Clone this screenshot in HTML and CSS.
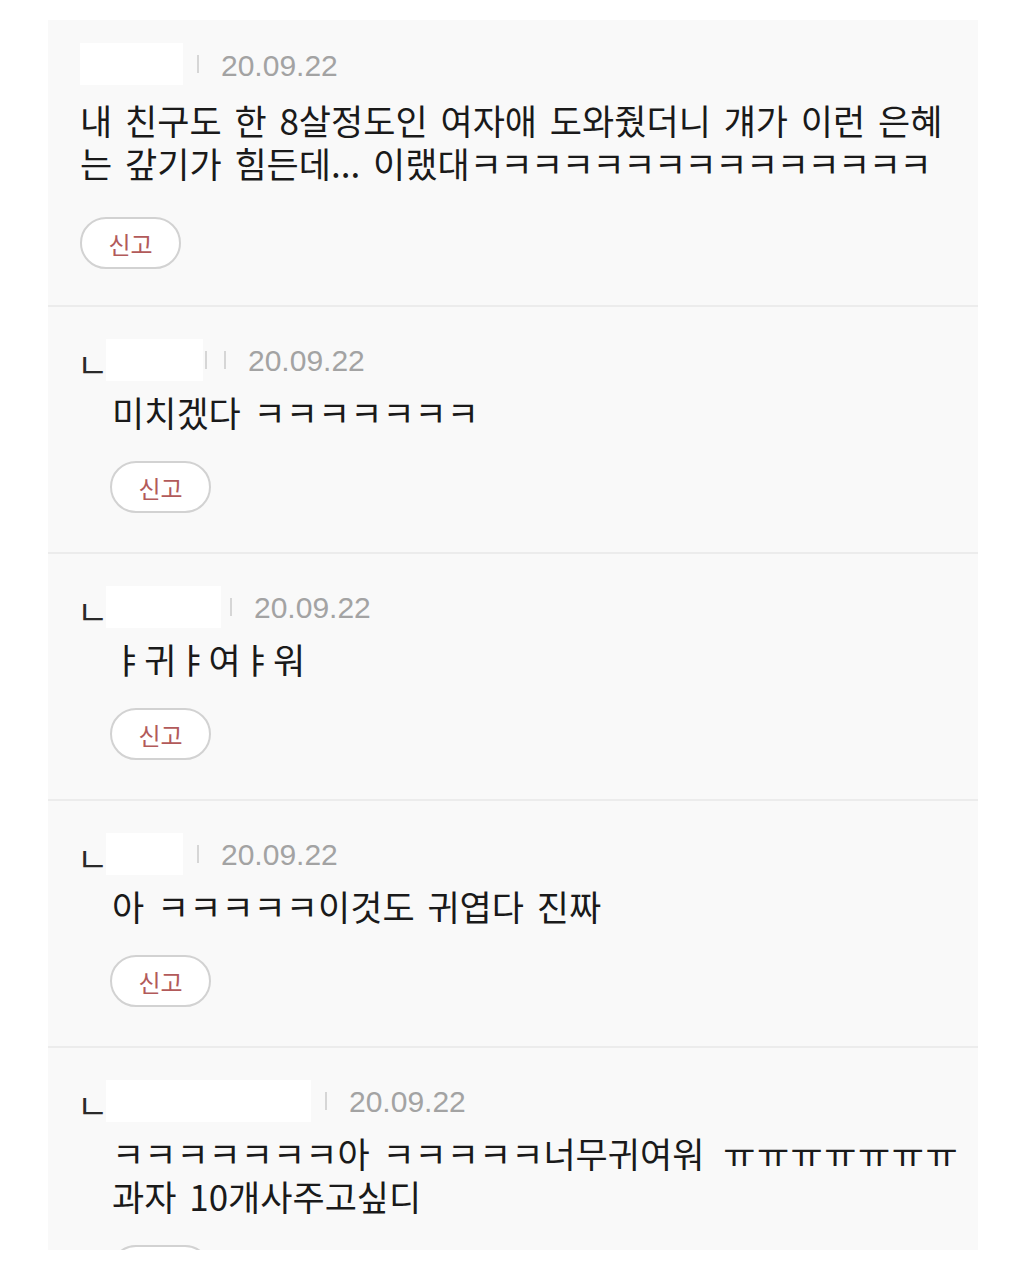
FILE: index.html
```html
<!DOCTYPE html>
<html lang="ko">
<head>
    <meta charset="UTF-8">
    <meta name="viewport" content="width=device-width, initial-scale=1.0">
    <title>댓글</title>
    <link rel="stylesheet" href="styles.css">
</head>
<body>
    <div class="comments">
        <div class="comment first">
            <div class="meta">
                <span class="name name-a"></span>
                <span class="bar"></span>
                <span class="date">20.09.22</span>
            </div>
            <p class="text">내 친구도 한 8살정도인 여자애 도와줬더니 걔가 이런 은혜<br>는 갚기가 힘든데... 이랬대<span class="laugh">ㅋㅋㅋㅋㅋㅋㅋㅋㅋㅋㅋㅋㅋㅋㅋ</span></p>
            <button type="button" class="report">신고</button>
        </div>

        <div class="comment reply">
            <div class="meta">
                <span class="arrow">ㄴ</span>
                <span class="name name-b"></span>
                <span class="bar bar-tight"></span>
                <span class="bar bar-second"></span>
                <span class="date">20.09.22</span>
            </div>
            <p class="text">미치겠다 ㅋㅋㅋㅋㅋㅋㅋ</p>
            <button type="button" class="report">신고</button>
        </div>

        <div class="comment reply">
            <div class="meta">
                <span class="arrow">ㄴ</span>
                <span class="name name-c"></span>
                <span class="bar bar-near"></span>
                <span class="date">20.09.22</span>
            </div>
            <p class="text">ㅑ귀ㅑ여ㅑ워</p>
            <button type="button" class="report">신고</button>
        </div>

        <div class="comment reply">
            <div class="meta">
                <span class="arrow">ㄴ</span>
                <span class="name name-d"></span>
                <span class="bar"></span>
                <span class="date">20.09.22</span>
            </div>
            <p class="text">아 ㅋㅋㅋㅋㅋ이것도 귀엽다 진짜</p>
            <button type="button" class="report">신고</button>
        </div>

        <div class="comment reply">
            <div class="meta">
                <span class="arrow">ㄴ</span>
                <span class="name name-e"></span>
                <span class="bar"></span>
                <span class="date">20.09.22</span>
            </div>
            <p class="text">ㅋㅋㅋㅋㅋㅋㅋ아 ㅋㅋㅋㅋㅋ너무귀여워 <span class="cry">ㅠㅠㅠㅠㅠㅠㅠ</span><br>과자 10개사주고싶디</p>
            <button type="button" class="report">신고</button>
        </div>
    </div>
</body>
</html>
```

FILE: styles.css
```css
body {
    margin: 0;
    background-color: #fff;
    font-family: "Noto Sans CJK KR", "Noto Sans", sans-serif;
}
.comments {
    width: 930px;
    height: 1230px;
    margin: 20px 0 0 48px;
    background-color: #f9f9f9;
    overflow: hidden;
}
.comment {
    padding: 32px 32px 39px 62px;
    border-bottom: 2px solid #ececec;
}
.comment.first {
    padding: 23px 32px 36px 32px;
}
.meta {
    display: flex;
    align-items: center;
    height: 42px;
}
.arrow {
    width: 22px;
    margin: 8px 7px 0 -33px;
    font-size: 34px;
    line-height: 1;
    color: #2a2a2a;
}
.name {
    height: 42px;
    background-color: #fff;
}
.name-a { width: 103px; }
.name-b { width: 97px; }
.name-c { width: 115px; }
.name-d { width: 77px; }
.name-e { width: 205px; }
.bar {
    width: 2px;
    height: 18px;
    margin-left: 14px;
    background-color: #d6d6d6;
}
.bar-tight {
    margin-left: 2px;
}
.bar-near {
    margin-left: 9px;
}
.bar-second {
    margin-left: 17px;
}
.date {
    margin: 4px 0 0 22px;
    font-family: "Liberation Sans", Arial, sans-serif;
    font-size: 30px;
    color: #a3a3a3;
}
.reply .date {
    margin-top: 2px;
}
.text {
    margin: 9px 0 0;
    font-size: 35px;
    line-height: 43px;
    word-spacing: 3px;
    white-space: nowrap;
    color: #1a1a1a;
}
.laugh {
    letter-spacing: -1.5px;
}
.cry {
    margin-left: 6px;
    letter-spacing: 1.5px;
}
.comment.first .text {
    margin-top: 13px;
}
.reply .text {
    padding-left: 2px;
}
.report {
    display: block;
    width: 101px;
    height: 52px;
    margin-top: 28px;
    padding: 0;
    background-color: #fff;
    border: 2px solid #d2d2d2;
    border-radius: 26px;
    font-family: "Noto Sans CJK KR", sans-serif;
    font-size: 24px;
    color: #b25a5a;
}
.comment.first .report {
    margin-top: 33px;
}
```
